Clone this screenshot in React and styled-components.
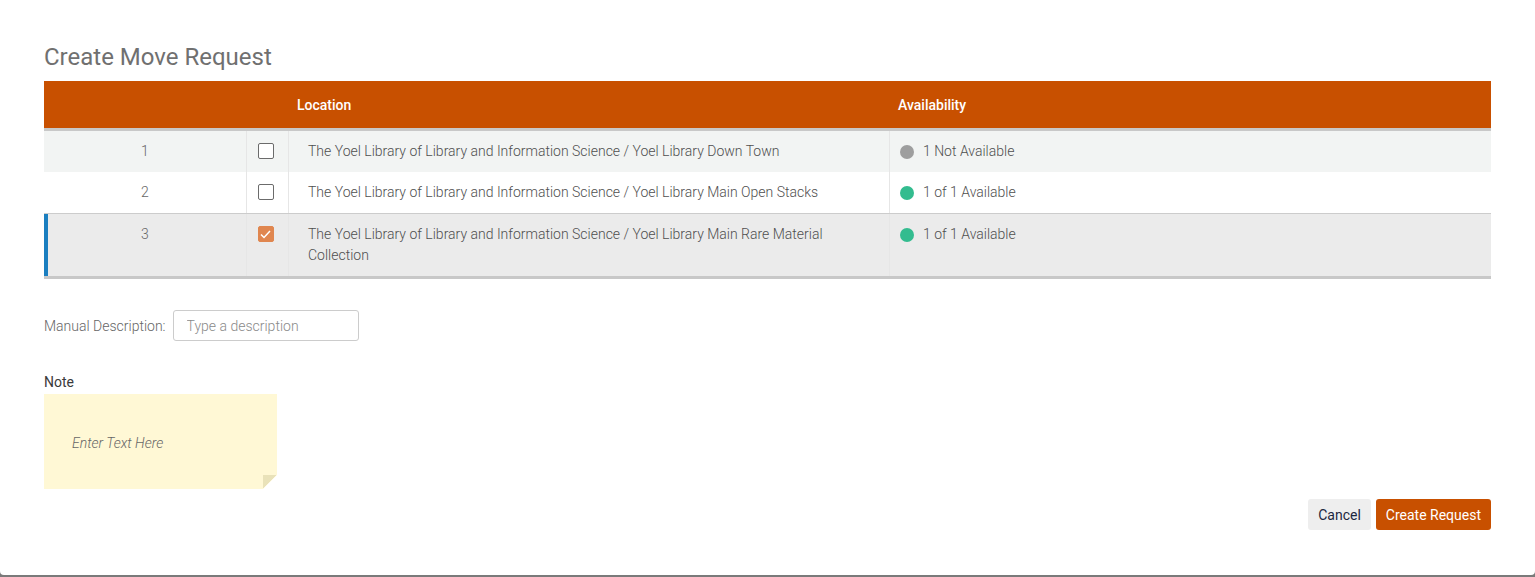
import React, { useState } from "react"
import styled, { createGlobalStyle } from "styled-components"

const GlobalStyle = createGlobalStyle`
    html, body {
        margin: 0;
        padding: 0;
        background: #7a7a7a;
        font-family: Roboto, "Liberation Sans", Arial, sans-serif;
    }
`

const Dialog = styled.div`
    box-sizing: border-box;
    height: 575px;
    background: #ffffff;
    border-radius: 0 0 4px 4px;
    padding: 43px 44px 0 44px;
    display: flex;
    flex-direction: column;
`

const Title = styled.h2`
    margin: 0 0 10px 0;
    font-size: 24px;
    line-height: 28px;
    font-weight: 400;
    color: #707070;
`

const Table = styled.div`
    display: flex;
    flex-direction: column;
    border-bottom: 3px solid #c8c8c8;
`

const Row = styled.div`
    display: grid;
    grid-template-columns: 202px 42px 601px 1fr;
    background: ${props => props.bg || '#ffffff'};
    border-top: ${props => props.selected ? '1px solid #cccccc' : 'none'};
    box-shadow: ${props => props.selected ? 'inset 4px 0 0 #1b7fc0' : 'none'};
`

const HeaderRow = styled(Row)`
    background: #c85000;
    height: 47px;
    border-bottom: 3px solid #c8c8c8;
`

const HeadCell = styled.div`
    display: flex;
    align-items: center;
    padding-left: 9px;
    color: #ffffff;
    font-size: 14px;
    font-weight: 500;
`

const Cell = styled.div`
    box-sizing: border-box;
    padding: 10px 20px 10px ${props => props.pl || 0}px;
    font-size: 14px;
    line-height: 21px;
    font-weight: 300;
    color: #4f4f4f;
    border-left: ${props => props.line ? '1px solid #e6e6e6' : 'none'};
    display: flex;
    align-items: flex-start;
    justify-content: ${props => props.center ? 'center' : 'flex-start'};
`

const NumCell = styled(Cell)`
    padding: 10px 0;
    color: #666666;
`

const CheckCell = styled(Cell)`
    padding: 10px 4px 10px 0;
`

const Check = styled.span`
    box-sizing: border-box;
    width: 16px;
    height: 16px;
    margin-top: 2px;
    border-radius: 2px;
    border: 1px solid ${props => props.checked ? '#e0864f' : '#6b6b6b'};
    background: ${props => props.checked ? '#e0864f' : '#ffffff'};
    display: flex;
    align-items: center;
    justify-content: center;
    cursor: pointer;
`

const Dot = styled.span`
    width: 14px;
    height: 14px;
    border-radius: 50%;
    background: ${props => props.ok ? '#33bc8f' : '#9e9e9e'};
    margin: 4px 9px 0 0;
    flex-shrink: 0;
`

const DescRow = styled.div`
    display: flex;
    align-items: center;
    margin-top: 31px;
`

const Label = styled.label`
    font-size: 14px;
    font-weight: 300;
    color: #666666;
    margin-right: 7px;
`

const Input = styled.input`
    box-sizing: border-box;
    width: 186px;
    height: 31px;
    border: 1px solid #cccccc;
    border-radius: 3px;
    padding: 0 13px;
    font-family: inherit;
    font-size: 14px;
    font-weight: 300;
    color: #333;
    outline: none;
    &::placeholder {
        color: #8a8a8a;
    }
`

const NoteLabel = styled.div`
    margin-top: 33px;
    font-size: 14px;
    line-height: 16px;
    color: #3a3a3a;
`

const Note = styled.div`
    position: relative;
    margin-top: 4px;
    width: 233px;
    height: 95px;
    background: #fff8d5;
    clip-path: polygon(0 0, 100% 0, 100% calc(100% - 14px), calc(100% - 14px) 100%, 0 100%);
    display: flex;
    align-items: center;
    padding-left: 28px;
    padding-top: 3px;
    box-sizing: border-box;
    font-size: 14px;
    font-style: italic;
    font-weight: 300;
    color: #666666;
`

const Fold = styled.span`
    position: absolute;
    right: 0;
    bottom: 0;
    width: 14px;
    height: 14px;
    background: linear-gradient(135deg, #e9e2b9 50%, transparent 50%);
`

const Footer = styled.div`
    display: flex;
    justify-content: flex-end;
    gap: 5px;
    margin-top: 10px;
`

const Button = styled.button`
    height: 31px;
    padding: 0 10px;
    border: none;
    border-radius: 3px;
    font-family: inherit;
    font-size: 14px;
    background: ${props => props.primary ? '#c85000' : '#eeeeee'};
    color: ${props => props.primary ? '#ffffff' : '#1c2740'};
    cursor: pointer;
`

const CheckMark = () => (
    <svg width="11" height="9" viewBox="0 0 11 9">
        <path d="M1 4.5 L4 7.5 L10 1" fill="none" stroke="#fff" strokeWidth="1.5" />
    </svg>
)

const rows = [
    { n: 1, loc: 'The Yoel Library of Library and Information Science / Yoel Library Down Town', ok: false, avail: '1 Not Available', bg: '#f2f4f3' },
    { n: 2, loc: 'The Yoel Library of Library and Information Science / Yoel Library Main Open Stacks', ok: true, avail: '1 of 1 Available', bg: '#ffffff' },
    { n: 3, loc: 'The Yoel Library of Library and Information Science / Yoel Library Main Rare Material Collection', ok: true, avail: '1 of 1 Available', bg: '#ebebeb' },
]

const App = () => {
    const [checked, setChecked] = useState([false, false, true])

    const toggle = (i) => {
        const next = [...checked]
        next[i] = !next[i]
        setChecked(next)
    }

    return (
        <>
            <GlobalStyle />
            <Dialog>
                <Title>Create Move Request</Title>
                <Table>
                    <HeaderRow>
                        <HeadCell />
                        <HeadCell />
                        <HeadCell>Location</HeadCell>
                        <HeadCell>Availability</HeadCell>
                    </HeaderRow>
                    {rows.map((r, i) => (
                        <Row key={r.n} bg={r.bg} selected={i === 2}>
                            <NumCell center>{r.n}</NumCell>
                            <CheckCell line center>
                                <Check checked={checked[i]} onClick={() => toggle(i)}>
                                    {checked[i] && <CheckMark />}
                                </Check>
                            </CheckCell>
                            <Cell line pl={19}>{r.loc}</Cell>
                            <Cell line pl={10}>
                                <Dot ok={r.ok} />
                                {r.avail}
                            </Cell>
                        </Row>
                    ))}
                </Table>
                <DescRow>
                    <Label>Manual Description:</Label>
                    <Input placeholder="Type a description" />
                </DescRow>
                <NoteLabel>Note</NoteLabel>
                <Note>
                    Enter Text Here
                    <Fold />
                </Note>
                <Footer>
                    <Button>Cancel</Button>
                    <Button primary>Create Request</Button>
                </Footer>
            </Dialog>
        </>
    )
}

export default App
